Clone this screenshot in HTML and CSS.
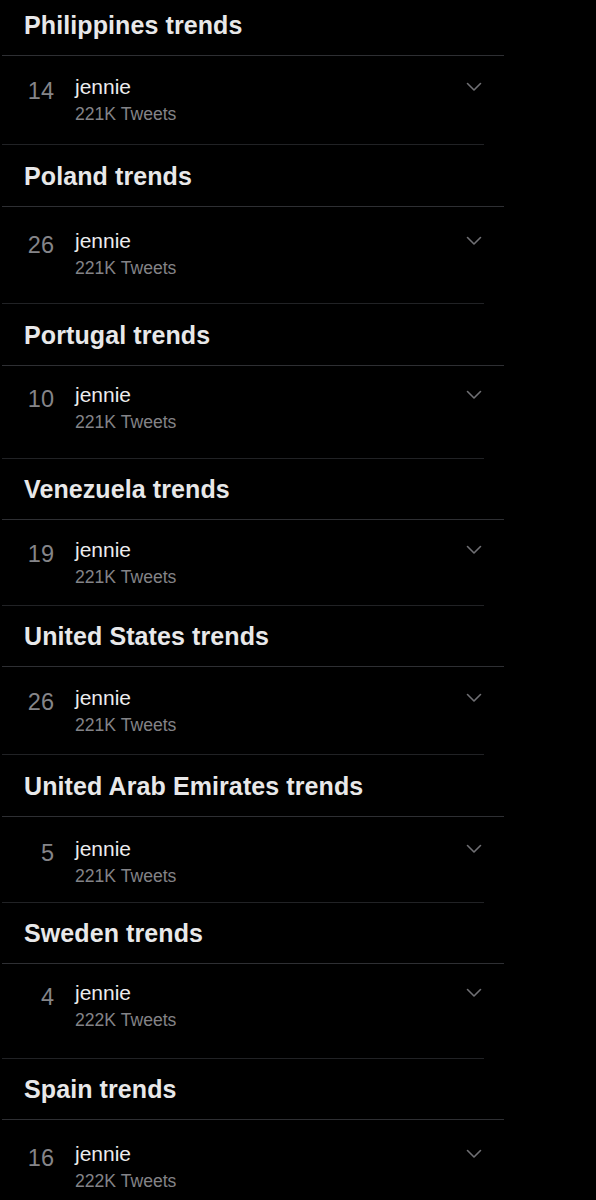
FILE: index.html
```html
<!DOCTYPE html>
<html lang="en">
<head>
<meta charset="utf-8">
<title>Trends</title>
<link rel="stylesheet" href="styles.css">
</head>
<body>
<main class="trends">
  <section class="trend-block s1">
    <h2 class="trend-heading">Philippines trends</h2>
    <div class="trend-row">
      <span class="rank">14</span>
      <div class="trend-info"><div class="trend-name">jennie</div><div class="trend-count">221K Tweets</div></div>
      <svg class="chevron" viewBox="0 0 16 10" aria-hidden="true"><path d="M1.5 1.5 L8 8 L14.5 1.5"/></svg>
    </div>
  </section>
  <section class="trend-block s2">
    <h2 class="trend-heading">Poland trends</h2>
    <div class="trend-row">
      <span class="rank">26</span>
      <div class="trend-info"><div class="trend-name">jennie</div><div class="trend-count">221K Tweets</div></div>
      <svg class="chevron" viewBox="0 0 16 10" aria-hidden="true"><path d="M1.5 1.5 L8 8 L14.5 1.5"/></svg>
    </div>
  </section>
  <section class="trend-block s3">
    <h2 class="trend-heading">Portugal trends</h2>
    <div class="trend-row">
      <span class="rank">10</span>
      <div class="trend-info"><div class="trend-name">jennie</div><div class="trend-count">221K Tweets</div></div>
      <svg class="chevron" viewBox="0 0 16 10" aria-hidden="true"><path d="M1.5 1.5 L8 8 L14.5 1.5"/></svg>
    </div>
  </section>
  <section class="trend-block s4">
    <h2 class="trend-heading">Venezuela trends</h2>
    <div class="trend-row">
      <span class="rank">19</span>
      <div class="trend-info"><div class="trend-name">jennie</div><div class="trend-count">221K Tweets</div></div>
      <svg class="chevron" viewBox="0 0 16 10" aria-hidden="true"><path d="M1.5 1.5 L8 8 L14.5 1.5"/></svg>
    </div>
  </section>
  <section class="trend-block s5">
    <h2 class="trend-heading">United States trends</h2>
    <div class="trend-row">
      <span class="rank">26</span>
      <div class="trend-info"><div class="trend-name">jennie</div><div class="trend-count">221K Tweets</div></div>
      <svg class="chevron" viewBox="0 0 16 10" aria-hidden="true"><path d="M1.5 1.5 L8 8 L14.5 1.5"/></svg>
    </div>
  </section>
  <section class="trend-block s6">
    <h2 class="trend-heading">United Arab Emirates trends</h2>
    <div class="trend-row">
      <span class="rank">5</span>
      <div class="trend-info"><div class="trend-name">jennie</div><div class="trend-count">221K Tweets</div></div>
      <svg class="chevron" viewBox="0 0 16 10" aria-hidden="true"><path d="M1.5 1.5 L8 8 L14.5 1.5"/></svg>
    </div>
  </section>
  <section class="trend-block s7">
    <h2 class="trend-heading">Sweden trends</h2>
    <div class="trend-row">
      <span class="rank">4</span>
      <div class="trend-info"><div class="trend-name">jennie</div><div class="trend-count">222K Tweets</div></div>
      <svg class="chevron" viewBox="0 0 16 10" aria-hidden="true"><path d="M1.5 1.5 L8 8 L14.5 1.5"/></svg>
    </div>
  </section>
  <section class="trend-block s8">
    <h2 class="trend-heading">Spain trends</h2>
    <div class="trend-row">
      <span class="rank">16</span>
      <div class="trend-info"><div class="trend-name">jennie</div><div class="trend-count">222K Tweets</div></div>
      <svg class="chevron" viewBox="0 0 16 10" aria-hidden="true"><path d="M1.5 1.5 L8 8 L14.5 1.5"/></svg>
    </div>
  </section>
</main>
</body>
</html>
```

FILE: styles.css
```css
* { box-sizing: border-box; }

html, body {
  margin: 0;
  padding: 0;
  background: #000;
}

body {
  font-family: "Liberation Sans", Arial, sans-serif;
  color: #e7e7e8;
  height: 1200px;
  overflow: hidden;
}

.trends {
  display: flex;
  flex-direction: column;
  padding-left: 2px;
}

.trend-heading {
  margin: 0;
  width: 502px;
  display: flex;
  align-items: flex-end;
  padding: 0 0 15px 22px;
  font-size: 25px;
  font-weight: 700;
  line-height: 30px;
  color: #e8e8e9;
  border-bottom: 1px solid #2e2f33;
  letter-spacing: 0.1px;
}

.trend-row {
  width: 482px;
  display: flex;
  align-items: flex-start;
  border-bottom: 1px solid #212225;
}

.rank {
  width: 52px;
  flex: none;
  text-align: right;
  padding-top: 4px;
  font-size: 23.5px;
  line-height: 26px;
  color: #858589;
}

.trend-info {
  flex: 1;
  margin-left: 21px;
  display: flex;
  flex-direction: column;
}

.trend-name {
  font-size: 21px;
  line-height: 26px;
  color: #ececed;
}

.trend-count {
  font-size: 17.6px;
  line-height: 28px;
  color: #838387;
}

.chevron {
  flex: none;
  width: 16px;
  height: 10px;
  margin-top: 8px;
  margin-right: 2px;
  fill: none;
  stroke: #707074;
  stroke-width: 1.6;
  stroke-linecap: round;
  stroke-linejoin: round;
}

/* per-screenshot spacing of each captured block */
.s1 .trend-heading { height: 56px; }
.s1 .trend-row { height: 89px; padding-top: 18px; }

.s2 .trend-heading { height: 62px; }
.s2 .trend-row { height: 97px; padding-top: 21px; }

.s3 .trend-heading { height: 62px; }
.s3 .trend-row { height: 93px; padding-top: 16px; }

.s4 .trend-heading { height: 61px; }
.s4 .trend-row { height: 86px; padding-top: 17px; }

.s5 .trend-heading { height: 61px; }
.s5 .trend-row { height: 88px; padding-top: 18px; }

.s6 .trend-heading { height: 62px; }
.s6 .trend-row { height: 86px; padding-top: 19px; }

.s7 .trend-heading { height: 61px; }
.s7 .trend-row { height: 95px; padding-top: 16px; }

.s8 .trend-heading { height: 61px; }
.s8 .trend-row { height: 90px; padding-top: 21px; border-bottom: none; }
```
